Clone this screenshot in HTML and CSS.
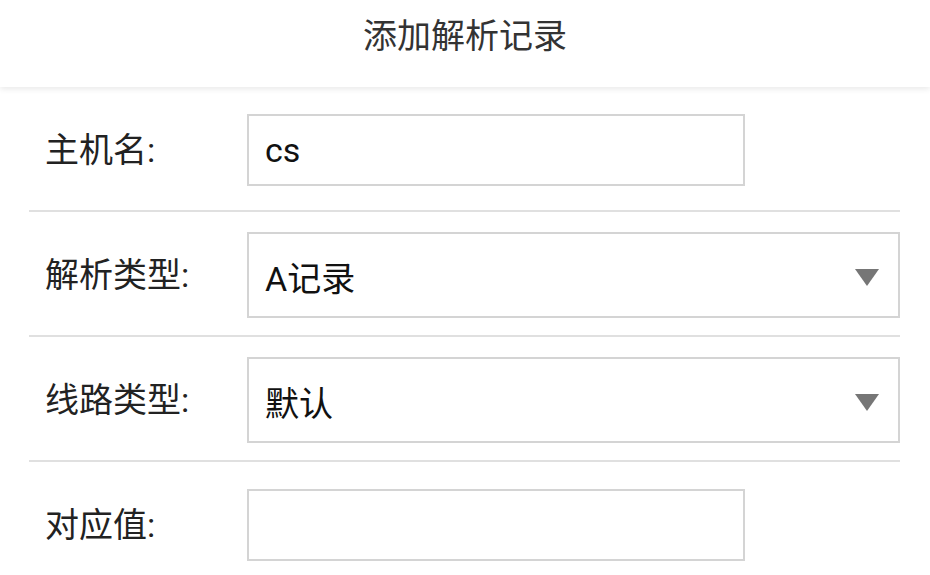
FILE: index.html
```html
<!DOCTYPE html>
<html lang="zh-CN">
<head>
<meta charset="utf-8">
<title>添加解析记录</title>
<link rel="stylesheet" href="styles.css">
</head>
<body>
<header class="topbar">
  <h1 class="title">添加解析记录</h1>
</header>
<main class="form">
  <div class="row row-input">
    <label class="label">主机名:</label>
    <div class="field field-input"><span class="value">cs</span></div>
  </div>
  <div class="row row-select">
    <label class="label">解析类型:</label>
    <div class="field field-select">
      <span class="value">A记录</span>
      <svg class="caret" width="24" height="17" viewBox="0 0 24 17"><polygon points="0,0 24,0 12,17" fill="#767676"/></svg>
    </div>
  </div>
  <div class="row row-select">
    <label class="label">线路类型:</label>
    <div class="field field-select">
      <span class="value">默认</span>
      <svg class="caret" width="24" height="17" viewBox="0 0 24 17"><polygon points="0,0 24,0 12,17" fill="#767676"/></svg>
    </div>
  </div>
  <div class="row row-input last">
    <label class="label">对应值:</label>
    <div class="field field-input"><span class="value"></span></div>
  </div>
</main>
</body>
</html>
```

FILE: styles.css
```css
* { box-sizing: border-box; }
html, body {
  margin: 0;
  padding: 0;
  background: #ffffff;
  font-family: Roboto, "Noto Sans CJK SC", sans-serif;
  color: #222222;
}
.topbar {
  height: 87px;
  background: #ffffff;
  box-shadow: 0 2px 6px rgba(0, 0, 0, 0.09);
  position: relative;
  z-index: 1;
}
.title {
  margin: 0;
  padding-top: 16px;
  line-height: 40px;
  font-size: 34px;
  font-weight: 400;
  color: #333333;
  text-align: center;
}
.form {
  padding: 0 30px 0 29px;
}
.row {
  display: flex;
  align-items: center;
  border-bottom: 2px solid #e0e0e0;
}
.row.last { border-bottom: none; }
.row-input { padding: 27px 0 24px; }
.row-select { padding: 20px 0 17px; }
.row.last { padding-top: 27px; }
.label {
  width: 218px;
  flex: none;
  padding-left: 16px;
  font-size: 34px;
  line-height: 40px;
  color: #222222;
}
.field {
  border: 2px solid #d4d4d4;
  display: flex;
  align-items: center;
  padding-left: 16px;
  font-size: 34px;
  line-height: 40px;
  color: #111111;
}
.field-input {
  width: 498px;
  height: 72px;
}
.field-select {
  flex: 1;
  height: 86px;
  padding-right: 19px;
  padding-top: 8px;
}
.field-select .value { flex: 1; }
.caret { flex: none; margin-top: -3px; }
```
